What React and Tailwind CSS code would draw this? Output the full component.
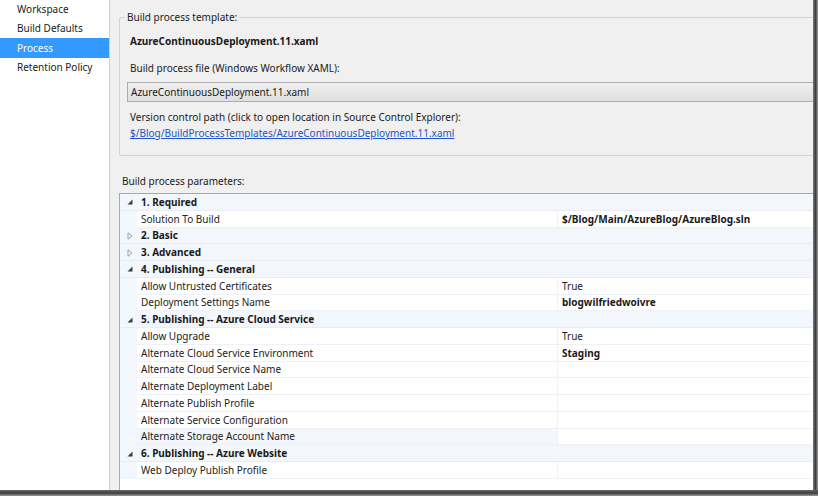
import React from 'react';

const sideItems = ['Workspace', 'Build Defaults', 'Process', 'Retention Policy'];

const rows = [
    { cat: true, open: true, label: '1. Required' },
    { name: 'Solution To Build', value: '$/Blog/Main/AzureBlog/AzureBlog.sln', bold: true },
    { cat: true, open: false, label: '2. Basic' },
    { cat: true, open: false, label: '3. Advanced' },
    { cat: true, open: true, label: '4. Publishing -- General' },
    { name: 'Allow Untrusted Certificates', value: 'True' },
    { name: 'Deployment Settings Name', value: 'blogwilfriedwoivre', bold: true },
    { cat: true, open: true, label: '5. Publishing -- Azure Cloud Service' },
    { name: 'Allow Upgrade', value: 'True' },
    { name: 'Alternate Cloud Service Environment', value: 'Staging', bold: true },
    { name: 'Alternate Cloud Service Name' },
    { name: 'Alternate Deployment Label' },
    { name: 'Alternate Publish Profile' },
    { name: 'Alternate Service Configuration' },
    { name: 'Alternate Storage Account Name', hilite: true },
    { cat: true, open: true, label: '6. Publishing -- Azure Website' },
    { name: 'Web Deploy Publish Profile' },
];

function Arrow({ open }) {
    if (open) {
        return (
            <svg width="6" height="6" viewBox="0 0 6 6">
                <polygon points="5.5,0.5 5.5,5.5 0.5,5.5" fill="#3c3c3c" />
            </svg>
        );
    }
    return (
        <svg width="6" height="8" viewBox="0 0 6 8">
            <polygon points="1,0.8 5,4 1,7.2" fill="none" stroke="#a0a0a0" strokeWidth="1" />
        </svg>
    );
}

function GridRow({ row }) {
    if (row.cat) {
        return (
            <div className="flex h-[16.75px] items-center bg-[#f3f6fb] border-b border-[#e9edf3]">
                <div className="w-[17px] flex justify-end pr-[4px] pt-[1px]">
                    <Arrow open={row.open} />
                </div>
                <span className="pl-[4px] font-bold text-[#1a1a1a]">{row.label}</span>
            </div>
        );
    }
    return (
        <div className="flex h-[16.75px]">
            <div className="w-[17px] bg-[#f3f6fb]" />
            <div className={`w-[420px] flex items-center pl-[4px] border-b border-[#eef1f5] ${row.hilite ? 'bg-[#f3f6fb]' : 'bg-white'}`}>
                <span className="text-[#222]">{row.name}</span>
            </div>
            <div className="flex-1 flex items-center pl-[4px] bg-white border-b border-l border-[#eef1f5]">
                <span className={row.bold ? 'font-bold text-[#1a1a1a]' : 'text-[#222]'}>{row.value}</span>
            </div>
        </div>
    );
}

export default function App() {
    return (
        <div className="w-[818px] h-[496px] flex flex-col overflow-hidden bg-white font-['Noto_Sans',sans-serif] text-[10px] leading-[16px] text-[#1a1a1a]">
            <div className="flex flex-1 min-h-0">
                <div className="flex flex-1 min-w-0">
                    {/* left navigation */}
                    <div className="w-[110px] bg-white border-r border-[#cfcfcf]">
                        <div className="-mt-[1px]">
                            {sideItems.map(item => (
                                <div
                                    key={item}
                                    className={`h-[19.5px] flex items-center pl-[17px] ${item === 'Process' ? 'bg-[#3399ff] text-white' : 'text-[#1a1a1a]'}`}
                                >
                                    {item}
                                </div>
                            ))}
                        </div>
                    </div>

                    {/* process page */}
                    <div className="flex-1 min-w-0 flex flex-col bg-[#f0f0f0] pl-[9px]">
                        <fieldset className="mt-[9px] border border-r-0 border-[#d4d4d4] rounded-l-[3px] pl-[5px] pt-[8px] pb-[14px]">
                            <legend className="px-[2px]">Build process template:</legend>
                            <div className="pl-[5px] font-bold">AzureContinuousDeployment.11.xaml</div>
                            <div className="pl-[5px] mt-[11px]">Build process file (Windows Workflow XAML):</div>
                            <div className="ml-[2px] mt-[6px] h-[20px] flex items-center pl-[3px] border border-r-0 border-[#adadad] bg-gradient-to-b from-[#efefef] to-[#dfdfdf]">
                                AzureContinuousDeployment.11.xaml
                            </div>
                            <div className="pl-[5px] mt-[7px]">Version control path (click to open location in Source Control Explorer):</div>
                            <div className="pl-[5px]">
                                <span className="text-[#2255cc] underline">$/Blog/BuildProcessTemplates/AzureContinuousDeployment.11.xaml</span>
                            </div>
                        </fieldset>

                        <div className="mt-[17px] pl-[3px]">Build process parameters:</div>

                        <div className="mt-[4px] flex-1 min-h-0 bg-white border-l border-t border-[#a8a8a8] overflow-hidden">
                            {rows.map((row, i) => (
                                <GridRow key={i} row={row} />
                            ))}
                        </div>
                    </div>
                </div>
                {/* window shadow, right */}
                <div className="w-[5px] bg-gradient-to-r from-[#7a7a7a] via-[#3e3e3e] to-[#a0a0a0]" />
            </div>
            {/* window shadow, bottom */}
            <div className="h-[6px] bg-gradient-to-b from-[#6a6a6a] via-[#3e3e3e] to-[#9a9a9a]" />
        </div>
    );
}
